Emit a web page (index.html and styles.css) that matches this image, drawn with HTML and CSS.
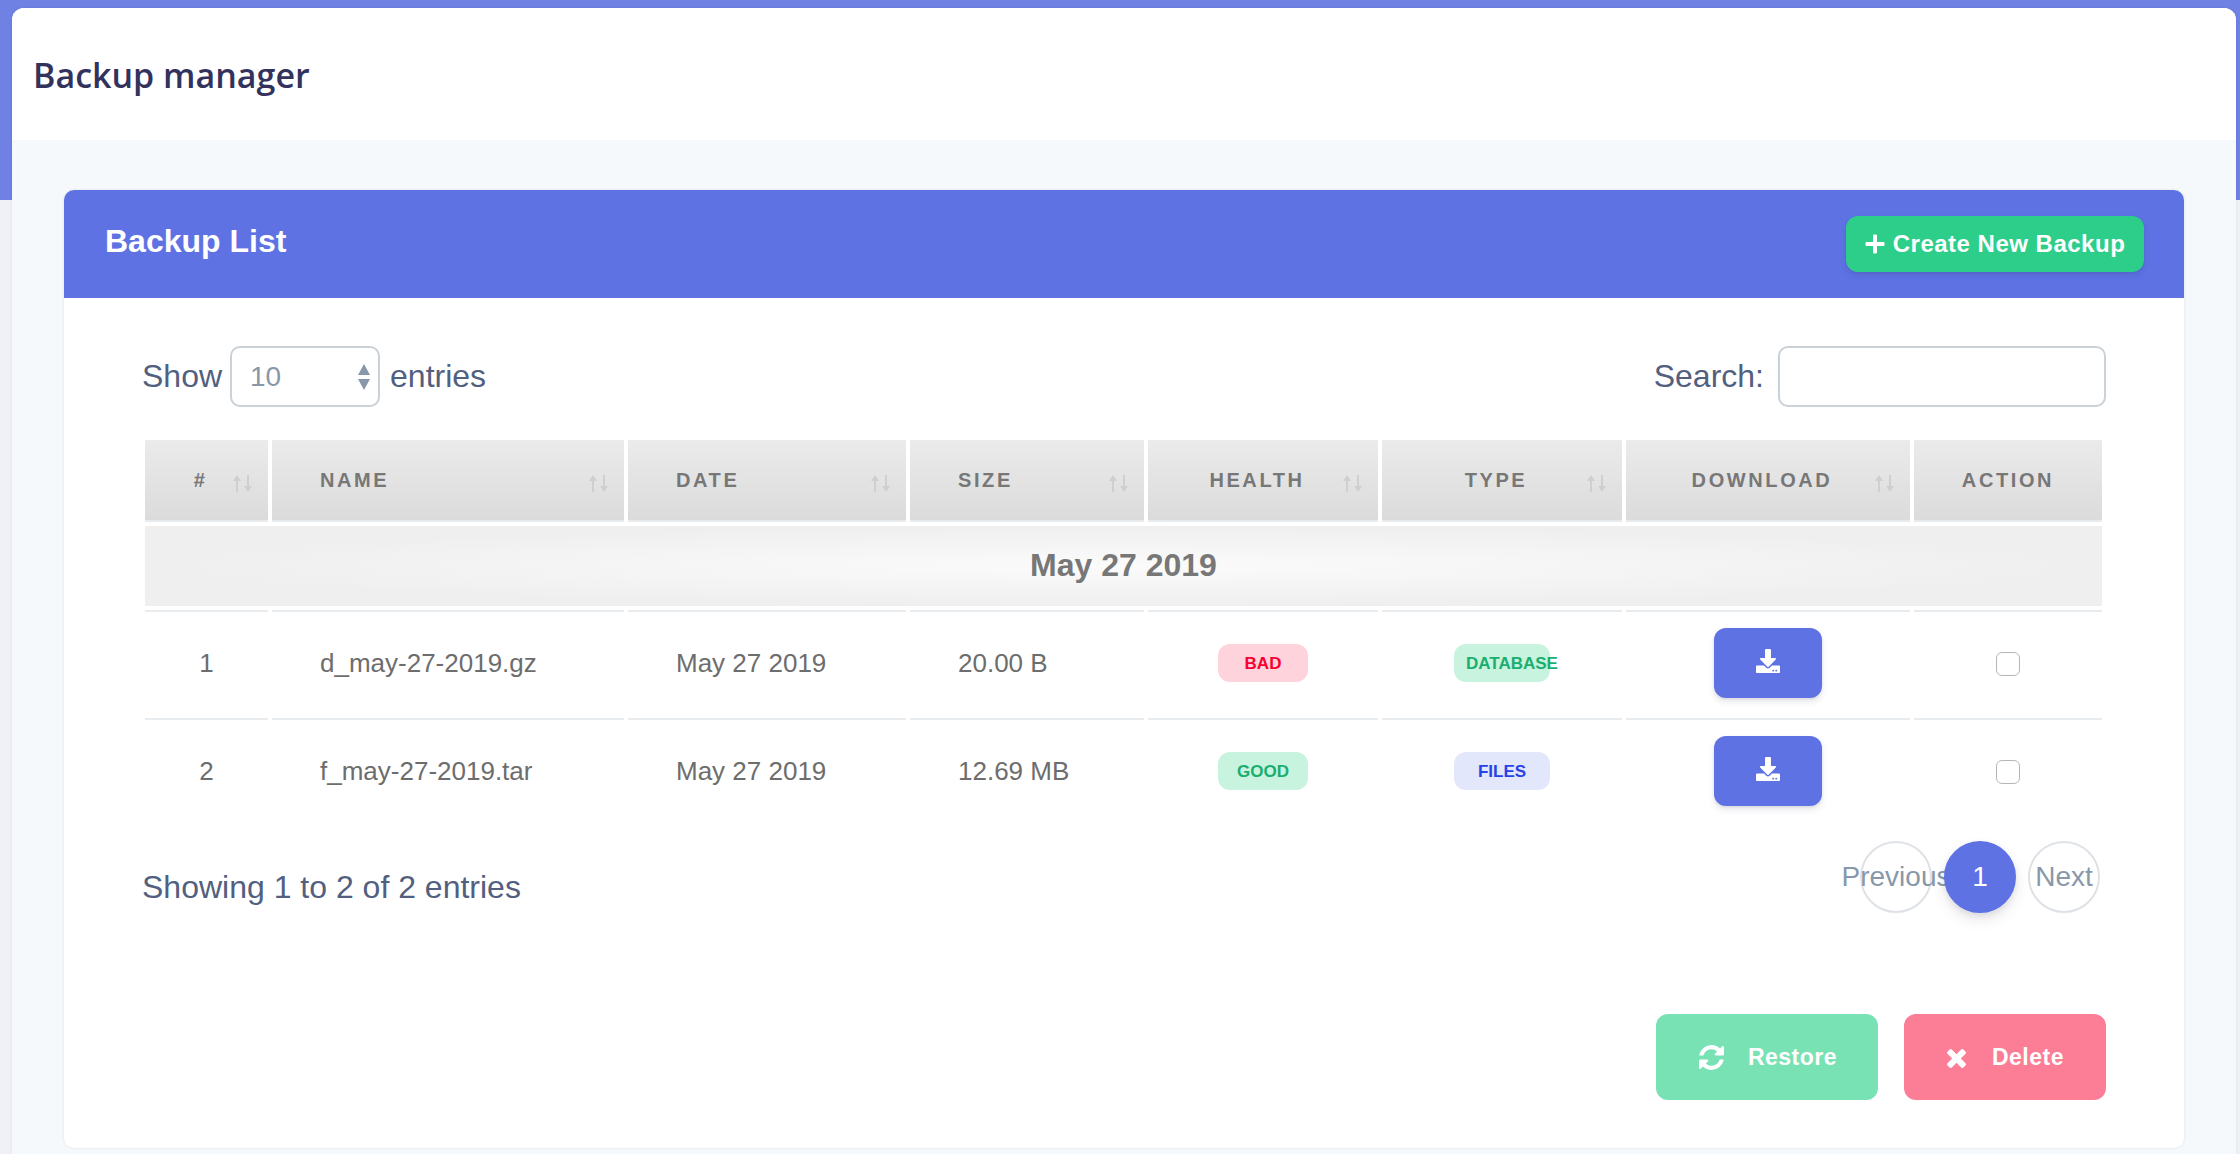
FILE: index.html
```html
<!DOCTYPE html>
<html>
<head>
    <title>Backup manager</title>
    <link rel="stylesheet" href="styles.css">
</head>
<body>
    <div class="panel">
        <div class="page-header">
            <h1>Backup manager</h1>
        </div>

        <div class="card">
            <div class="card-header">
                <h2>Backup List</h2>
                <button class="btn-create">
                    <svg class="icon-plus" viewBox="0 0 20 20"><path d="M8 1.5a1 1 0 0 1 1-1h2a1 1 0 0 1 1 1V8h6.5a1 1 0 0 1 1 1v2a1 1 0 0 1-1 1H12v6.5a1 1 0 0 1-1 1H9a1 1 0 0 1-1-1V12H1.500a1 1 0 0 1-1-1V9a1 1 0 0 1 1-1H8z"/></svg>
                    Create New Backup
                </button>
            </div>

            <div class="card-body">
                <div class="controls">
                    <label class="control">Show
                        <span class="select-wrap">
                            <select><option>10</option></select>
                            <svg class="select-arrows" viewBox="0 0 14 26"><path d="M7 0l6 11H1zM7 26L1 15h12z"/></svg>
                        </span>
                        entries
                    </label>
                    <label class="control control-search">Search: <input type="text" class="search"></label>
                </div>

                <table class="backups">
                    <colgroup>
                        <col class="c-num"><col class="c-name"><col class="c-date"><col class="c-size">
                        <col class="c-health"><col class="c-type"><col class="c-download"><col class="c-action">
                    </colgroup>
                    <thead>
                        <tr>
                            <th class="center sort">#<svg class="sort-icon" viewBox="0 0 21 17"><use href="#arrows"/></svg></th>
                            <th class="sort">Name<svg class="sort-icon" viewBox="0 0 21 17"><use href="#arrows"/></svg></th>
                            <th class="sort">Date<svg class="sort-icon" viewBox="0 0 21 17"><use href="#arrows"/></svg></th>
                            <th class="sort">Size<svg class="sort-icon" viewBox="0 0 21 17"><use href="#arrows"/></svg></th>
                            <th class="center sort">Health<svg class="sort-icon" viewBox="0 0 21 17"><use href="#arrows"/></svg></th>
                            <th class="center sort">Type<svg class="sort-icon" viewBox="0 0 21 17"><use href="#arrows"/></svg></th>
                            <th class="center sort">Download<svg class="sort-icon" viewBox="0 0 21 17"><use href="#arrows"/></svg></th>
                            <th class="center">Action</th>
                        </tr>
                    </thead>
                    <tbody>
                        <tr>
                            <td colspan="8" class="group">May 27 2019</td>
                        </tr>
                        <tr>
                            <td class="center">1</td>
                            <td>d_may-27-2019.gz</td>
                            <td>May 27 2019</td>
                            <td>20.00 B</td>
                            <td class="center"><span class="badge badge-bad">Bad</span></td>
                            <td class="center"><span class="badge badge-type badge-good">Database</span></td>
                            <td class="center"><button class="btn-download"><svg viewBox="0 0 512 512"><use href="#download"/></svg></button></td>
                            <td class="center"><input type="checkbox" class="check"></td>
                        </tr>
                        <tr>
                            <td class="center">2</td>
                            <td>f_may-27-2019.tar</td>
                            <td>May 27 2019</td>
                            <td>12.69 MB</td>
                            <td class="center"><span class="badge badge-good">Good</span></td>
                            <td class="center"><span class="badge badge-type badge-files">Files</span></td>
                            <td class="center"><button class="btn-download"><svg viewBox="0 0 512 512"><use href="#download"/></svg></button></td>
                            <td class="center"><input type="checkbox" class="check"></td>
                        </tr>
                    </tbody>
                </table>

                <div class="table-footer">
                    <div class="info">Showing 1 to 2 of 2 entries</div>
                    <div class="pagination">
                        <a class="page">Previous</a>
                        <a class="page active">1</a>
                        <a class="page">Next</a>
                    </div>
                </div>

                <div class="actions">
                    <button class="btn-action btn-restore">
                        <svg class="icon-restore" viewBox="0 128 1536 1536"><path d="M1511 1056q0 5-1 7-64 268-268 434.5t-478 166.5q-146 0-282.5-55t-243.5-157l-129 129q-19 19-45 19t-45-19-19-45v-448q0-26 19-45t45-19h448q26 0 45 19t19 45-19 45l-137 137q71 66 161 102t187 36q134 0 250-65t186-179q11-17 53-117 8-23 30-23h192q13 0 22.5 9.5t9.5 22.5zm25-800v448q0 26-19 45t-45 19h-448q-26 0-45-19t-19-45 19-45l138-138q-148-137-349-137-134 0-250 65t-186 179q-11 17-53 117-8 23-30 23h-199q-13 0-22.5-9.5t-9.5-22.5v-7q65-268 270-434.5t480-166.5q146 0 284 55.5t245 156.5l130-129q19-19 45-19t45 19 19 45z"/></svg>
                        Restore
                    </button>
                    <button class="btn-action btn-delete">
                        <svg class="icon-delete" viewBox="110 238 1188 1316"><path d="M1298 1322q0 40-28 68l-136 136q-28 28-68 28t-68-28l-294-294-294 294q-28 28-68 28t-68-28l-136-136q-28-28-28-68t28-68l294-294-294-294q-28-28-28-68t28-68l136-136q28-28 68-28t68 28l294 294 294-294q28-28 68-28t68 28l136 136q28 28 28 68t-28 68l-294 294 294 294q28 28 28 68z"/></svg>
                        Delete
                    </button>
                </div>
            </div>
        </div>
    </div>

    <!-- shared icons -->
    <svg class="defs" width="0" height="0">
        <defs>
            <g id="arrows">
                <path d="M5 0l4 6H6v11H4V6H1z"/>
                <path d="M15 0h2v11h3l-4 6-4-6h3z"/>
            </g>
            <path id="download" d="M216 0h80c13.300 0 24 10.700 24 24v168h87.700c17.800 0 26.700 21.500 14.100 34.100L269.700 378.300c-7.500 7.500-19.800 7.500-27.300 0L90.100 226.100c-12.600-12.600-3.700-34.100 14.100-34.100H192V24c0-13.300 10.700-24 24-24zm296 376v112c0 13.300-10.700 24-24 24H24c-13.300 0-24-10.700-24-24V376c0-13.300 10.700-24 24-24h146.700l49 49c20.100 20.100 52.500 20.100 72.600 0l49-49H488c13.300 0 24 10.700 24 24zm-124 88c0-11-9-20-20-20s-20 9-20 20 9 20 20 20 20-9 20-20zm64 0c0-11-9-20-20-20s-20 9-20 20 9 20 20 20 20-9 20-20z"/>
        </defs>
    </svg>
</body>
</html>
```

FILE: styles.css
```css
* {
    box-sizing: border-box;
}

html, body {
    height: 1154px;
    overflow: hidden;
}

body {
    margin: 0;
    font-family: "Liberation Sans", Arial, sans-serif;
    color: #525f7f;
    background: linear-gradient(#6f81e3, #6f81e3) top left / 100% 200px no-repeat, #eff1f7;
}

.defs {
    position: absolute;
}

.panel {
    margin: 8px 4px 0 12px;
    height: 1146px;
    background-color: #f6f9fc;
    border-radius: 12px 12px 0 0;
    overflow: hidden;
    box-shadow: 0 0 3px rgba(0, 0, 0, 0.08);
}

.page-header {
    height: 132px;
    padding-left: 21px;
    display: flex;
    align-items: center;
    background-color: #fff;
}

h1 {
    margin: 2px 0 0;
    font-family: "Open Sans", sans-serif;
    font-size: 34px;
    font-weight: 600;
    color: #32325d;
}

.card {
    margin: 50px 52px 0 52px;
    background-color: #fff;
    border-radius: 10px;
    box-shadow: 0 0 3px rgba(0, 0, 0, 0.1);
    overflow: hidden;
}

.card-header {
    height: 108px;
    padding: 0 40px 0 41px;
    display: flex;
    align-items: center;
    justify-content: space-between;
    background-color: #5e72e4;
}

h2 {
    margin: 0 0 6px;
    font-size: 32px;
    font-weight: bold;
    color: #fff;
}

button {
    font-family: inherit;
    border: none;
    color: #fff;
}

.btn-create {
    width: 298px;
    height: 56px;
    display: flex;
    align-items: center;
    justify-content: center;
    gap: 8px;
    font-size: 24px;
    font-weight: bold;
    letter-spacing: 0.5px;
    background-color: #2dce89;
    border-radius: 12px;
    box-shadow: 0 4px 6px rgba(50, 50, 93, 0.11), 0 1px 3px rgba(0, 0, 0, 0.08);
}

.icon-plus {
    width: 20px;
    height: 20px;
    fill: #fff;
}

.card-body {
    height: 850px;
    padding: 48px 78px 0 77px;
}

.controls {
    height: 61px;
    display: flex;
    justify-content: space-between;
}

.control {
    display: flex;
    align-items: center;
    gap: 8px;
    margin-left: 1px;
    font-size: 32px;
}

.control-search {
    gap: 14px;
}

.select-wrap {
    position: relative;
    display: block;
    height: 61px;
    margin-right: 2px;
}

select {
    width: 150px;
    height: 61px;
    padding-left: 18px;
    font-family: inherit;
    font-size: 28px;
    color: #8898aa;
    background-color: #fff;
    border: 2px solid #cad1d7;
    border-radius: 10px;
    appearance: none;
}

.select-arrows {
    position: absolute;
    top: 18px;
    right: 9px;
    width: 14px;
    height: 26px;
    fill: #8898aa;
    pointer-events: none;
}

.search {
    width: 328px;
    height: 61px;
    background-color: #fff;
    border: 2px solid #cad1d7;
    border-radius: 10px;
}

.backups {
    width: 1965px;
    margin-top: 29px;
    table-layout: fixed;
    border-collapse: separate;
    border-spacing: 4px;
}

.c-num { width: 123px; }
.c-name { width: 352px; }
.c-date { width: 278px; }
.c-size { width: 234px; }
.c-health { width: 230px; }
.c-type { width: 240px; }
.c-download { width: 284px; }
.c-action { width: 188px; }

th {
    position: relative;
    height: 82px;
    padding: 0 0 0 48px;
    text-align: left;
    font-size: 20px;
    font-weight: bold;
    letter-spacing: 2.6px;
    text-transform: uppercase;
    color: #777;
    background: linear-gradient(#ebebec, #dbdbdb);
    border-bottom: 2px solid #e9ecef;
}

th.center {
    padding: 0;
    text-align: center;
}

th.center.sort {
    padding-right: 12px;
}

.sort-icon {
    position: absolute;
    top: 35px;
    right: 15px;
    width: 21px;
    height: 17px;
    fill: #cfcfcf;
}

td {
    height: 104px;
    padding: 0 0 0 48px;
    font-size: 26px;
    color: #6d6d6d;
    border-top: 2px solid #e9ecef;
}

td.center {
    padding: 0;
    text-align: center;
}

td.group {
    height: 80px;
    padding: 0 0 2px;
    text-align: center;
    font-size: 32px;
    font-weight: bold;
    color: #777;
    border-top: none;
    background: radial-gradient(ellipse at center, #fbfbfb 0%, #efefef 70%);
}

.badge {
    display: inline-block;
    width: 90px;
    height: 38px;
    line-height: 40px;
    padding: 0 12px;
    font-size: 17px;
    font-weight: bold;
    text-transform: uppercase;
    text-align: center;
    white-space: nowrap;
    vertical-align: middle;
    border-radius: 12px;
}

.badge-type {
    width: 96px;
}

.badge-bad {
    color: #f80031;
    background-color: #fed3dc;
}

.badge-good {
    color: #1aae6f;
    background-color: #c8f3df;
}

.badge-files {
    color: #2643e9;
    background-color: #e2e7fb;
}

.btn-download {
    width: 108px;
    height: 70px;
    display: inline-flex;
    align-items: center;
    justify-content: center;
    vertical-align: middle;
    background-color: #5e72e4;
    border-radius: 12px;
    box-shadow: 0 4px 6px rgba(50, 50, 93, 0.11), 0 1px 3px rgba(0, 0, 0, 0.08);
}

.btn-download svg {
    width: 24px;
    height: 24px;
    margin-bottom: 4px;
    fill: #fff;
}

.check {
    width: 24px;
    height: 24px;
    margin: 0 0 2px;
    vertical-align: middle;
    background-color: #fff;
    border: 1.500px solid #b5b5b5;
    border-radius: 6px;
    appearance: none;
}

.table-footer {
    margin-top: 15px;
    display: flex;
    justify-content: space-between;
    align-items: flex-start;
}

.info {
    margin: 22px 0 0 1px;
    font-size: 32px;
    line-height: 48px;
}

.pagination {
    margin-right: 6px;
    display: flex;
    gap: 12px;
}

.page {
    width: 72px;
    height: 72px;
    display: flex;
    align-items: center;
    justify-content: center;
    font-size: 28px;
    color: #8898aa;
    border: 2px solid #dee2e6;
    border-radius: 50%;
}

.page.active {
    position: relative;
    color: #fff;
    background-color: #5e72e4;
    border-color: #5e72e4;
    box-shadow: 0 7px 14px rgba(50, 50, 93, 0.1), 0 3px 6px rgba(0, 0, 0, 0.08);
}

.actions {
    margin-top: 101px;
    display: flex;
    justify-content: flex-end;
    gap: 26px;
}

.btn-action {
    height: 86px;
    display: flex;
    align-items: center;
    justify-content: center;
    font-size: 23px;
    font-weight: bold;
    letter-spacing: 0.5px;
    border-radius: 12px;
}

.btn-action svg {
    fill: #fff;
}

.btn-restore {
    width: 222px;
    gap: 24px;
    padding-left: 8px;
    background-color: #78e2b5;
}

.icon-restore {
    width: 25px;
    height: 25px;
}

.btn-delete {
    width: 202px;
    gap: 25px;
    background-color: #fb7e96;
}

.icon-delete {
    width: 21px;
    height: 21px;
}
```
